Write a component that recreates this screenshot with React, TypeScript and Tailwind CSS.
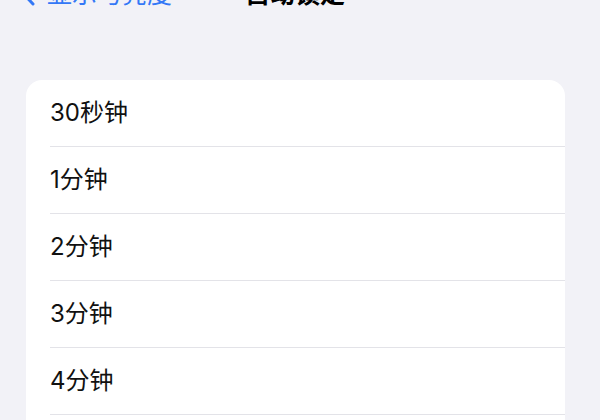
import React from "react";

const options = ["30秒钟", "1分钟", "2分钟", "3分钟", "4分钟", "5分钟"];

export default function App() {
  return (
    <div
      className="w-[600px] h-[420px] overflow-hidden bg-[#f2f2f7]"
      style={{ fontFamily: '"Inter", "Noto Sans CJK SC", sans-serif' }}
    >
      {/* Nav bar, mostly scrolled off the top */}
      <div className="relative -mt-[18px] h-[25px] flex items-center">
        <div className="flex items-center pl-[22px] text-[#3478f6]">
          <svg width="13" height="22" viewBox="0 0 13 22" fill="none" className="mr-[12px]">
            <path d="M11 2L2.5 11L11 20" stroke="currentColor" strokeWidth="3" strokeLinecap="round" strokeLinejoin="round" />
          </svg>
          <span className="text-[25px] leading-none">显示与亮度</span>
        </div>
        <span className="absolute left-[245px] text-[25px] leading-none font-bold text-black">自动锁定</span>
      </div>

      <div className="mt-[73px] ml-[26px] w-[539px] bg-white rounded-[16px] overflow-hidden">
        {options.map((label) => (
          <div key={label} className="pl-[24px]">
            <div className="h-[67px] pb-[1px] flex items-center text-[24px] text-[#111] border-b border-[#e3e3e8]">
              {label}
            </div>
          </div>
        ))}
      </div>
    </div>
  );
}
